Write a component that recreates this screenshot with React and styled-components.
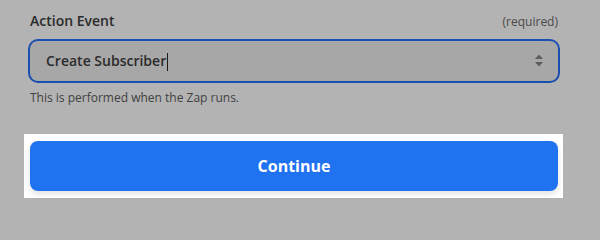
import React from "react";
import styled, { createGlobalStyle } from "styled-components";

const GlobalStyle = createGlobalStyle`
  html, body {
    margin: 0;
    padding: 0;
    background: #b3b3b3;
  }
  body {
    font-family: "Open Sans", "Noto Sans", sans-serif;
    width: 600px;
    height: 215px;
    overflow: hidden;
  }
`;

const Page = styled.div`
  display: flex;
  flex-direction: column;
  padding: 11px 40px 0 28px;
  width: 600px;
  box-sizing: border-box;
`;

const LabelRow = styled.div`
  display: flex;
  justify-content: space-between;
  align-items: baseline;
  padding: 0 2px;
  height: 24px;
`;

const Label = styled.span`
  font-size: 14px;
  font-weight: 600;
  color: #2b2b2b;
`;

const Required = styled.span`
  font-size: 12px;
  color: #4a4a4a;
`;

const Select = styled.div`
  display: flex;
  align-items: center;
  justify-content: space-between;
  height: 44px;
  margin-top: 4px;
  padding: 0 14px 0 16px;
  box-sizing: border-box;
  border: 2px solid #1a4fb0;
  border-radius: 10px;
  background: #a7a7a7;
`;

const Value = styled.span`
  font-size: 14px;
  font-weight: 600;
  color: #2b2b2b;
`;

const Caret = styled.span`
  display: inline-block;
  width: 1px;
  height: 18px;
  background: #1a1a1a;
  vertical-align: middle;
  margin-left: 1px;
`;

const Help = styled.div`
  font-size: 12px;
  color: #3f3f3f;
  margin-top: 6px;
  padding-left: 2px;
`;

const Highlight = styled.div`
  background: #ffffff;
  margin: 28px -3px 0 -4px;
  padding: 7px 5px 7px 6px;
`;

const Button = styled.button`
  display: flex;
  width: 100%;
  height: 50px;
  align-items: center;
  justify-content: center;
  border: none;
  border-radius: 8px;
  background: #1f72f0;
  color: #ffffff;
  font-family: "Open Sans", "Noto Sans", sans-serif;
  font-size: 16px;
  font-weight: 700;
  box-shadow: 0 3px 6px rgba(0, 0, 0, 0.12);
`;

const SortIcon = () => (
  <svg width="10" height="14" viewBox="0 0 10 14">
    <path d="M5 0.5 L9 5 L1 5 Z" fill="#5c5c5c" />
    <path d="M1 8 L9 8 L5 12.5 Z" fill="#5c5c5c" />
  </svg>
);

export default function App() {
  return (
    <>
      <GlobalStyle />
      <Page>
        <LabelRow>
          <Label>Action Event</Label>
          <Required>(required)</Required>
        </LabelRow>
        <Select>
          <Value>
            Create Subscriber
            <Caret />
          </Value>
          <SortIcon />
        </Select>
        <Help>This is performed when the Zap runs.</Help>
        <Highlight>
          <Button>Continue</Button>
        </Highlight>
      </Page>
    </>
  );
}
